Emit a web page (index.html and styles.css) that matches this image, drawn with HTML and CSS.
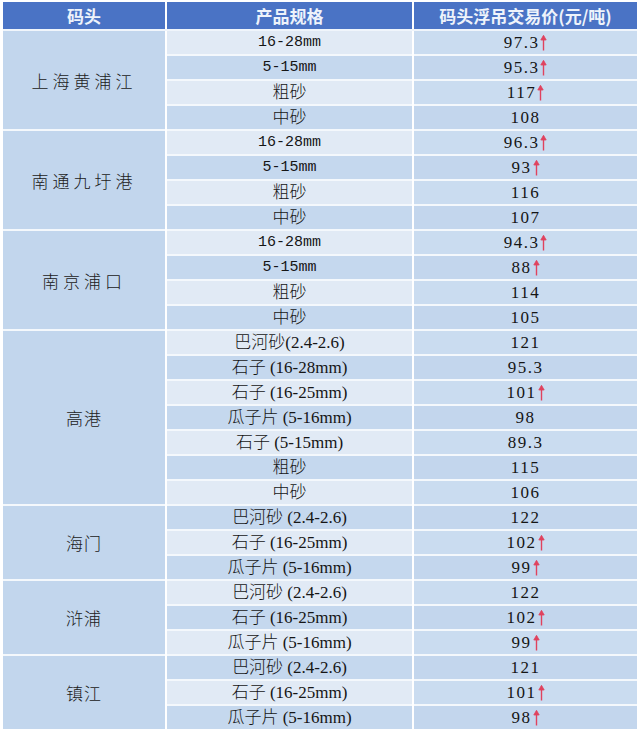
FILE: index.html
```html
<!DOCTYPE html>
<html lang="zh">
<head>
<meta charset="utf-8">
<title>码头浮吊交易价</title>
<link rel="stylesheet" href="styles.css">
</head>
<body>
<div class="wrap">
<table class="price">
  <colgroup><col class="c1"><col class="c2"><col class="c3"></colgroup>
  <thead>
    <tr><th>码头</th><th>产品规格</th><th>码头浮吊交易价(元/吨)</th></tr>
  </thead>
  <tbody>
    <tr class="l"><td class="port sp" rowspan="4">上海黄浦江</td><td class="mm">16-28mm</td><td class="v">97.3<svg class="up" viewBox="0 0 7 16"><path d="M3.5 16V3"/><path class="h" d="M0.8 5.5L3.5 0.8 6.2 5.5Z"/></svg></td></tr>
    <tr class="m"><td class="mm">5-15mm</td><td class="v">95.3<svg class="up" viewBox="0 0 7 16"><path d="M3.5 16V3"/><path class="h" d="M0.8 5.5L3.5 0.8 6.2 5.5Z"/></svg></td></tr>
    <tr class="l"><td class="cn">粗砂</td><td class="v">117<svg class="up" viewBox="0 0 7 16"><path d="M3.5 16V3"/><path class="h" d="M0.8 5.5L3.5 0.8 6.2 5.5Z"/></svg></td></tr>
    <tr class="m"><td class="cn">中砂</td><td class="v">108</td></tr>

    <tr class="l"><td class="port sp" rowspan="4">南通九圩港</td><td class="mm">16-28mm</td><td class="v">96.3<svg class="up" viewBox="0 0 7 16"><path d="M3.5 16V3"/><path class="h" d="M0.8 5.5L3.5 0.8 6.2 5.5Z"/></svg></td></tr>
    <tr class="m"><td class="mm">5-15mm</td><td class="v">93<svg class="up" viewBox="0 0 7 16"><path d="M3.5 16V3"/><path class="h" d="M0.8 5.5L3.5 0.8 6.2 5.5Z"/></svg></td></tr>
    <tr class="l"><td class="cn">粗砂</td><td class="v">116</td></tr>
    <tr class="m"><td class="cn">中砂</td><td class="v">107</td></tr>

    <tr class="l"><td class="port sp" rowspan="4">南京浦口</td><td class="mm">16-28mm</td><td class="v">94.3<svg class="up" viewBox="0 0 7 16"><path d="M3.5 16V3"/><path class="h" d="M0.8 5.5L3.5 0.8 6.2 5.5Z"/></svg></td></tr>
    <tr class="m"><td class="mm">5-15mm</td><td class="v">88<svg class="up" viewBox="0 0 7 16"><path d="M3.5 16V3"/><path class="h" d="M0.8 5.5L3.5 0.8 6.2 5.5Z"/></svg></td></tr>
    <tr class="l"><td class="cn">粗砂</td><td class="v">114</td></tr>
    <tr class="m"><td class="cn">中砂</td><td class="v">105</td></tr>

    <tr class="l"><td class="port" rowspan="7">高港</td><td class="cn">巴河砂(2.4-2.6)</td><td class="v">121</td></tr>
    <tr class="m"><td class="cn">石子 (16-28mm)</td><td class="v">95.3</td></tr>
    <tr class="l"><td class="cn">石子 (16-25mm)</td><td class="v">101<svg class="up" viewBox="0 0 7 16"><path d="M3.5 16V3"/><path class="h" d="M0.8 5.5L3.5 0.8 6.2 5.5Z"/></svg></td></tr>
    <tr class="m"><td class="cn">瓜子片 (5-16mm)</td><td class="v">98</td></tr>
    <tr class="l"><td class="cn">石子 (5-15mm)</td><td class="v">89.3</td></tr>
    <tr class="m"><td class="cn">粗砂</td><td class="v">115</td></tr>
    <tr class="l"><td class="cn">中砂</td><td class="v">106</td></tr>

    <tr class="m"><td class="port" rowspan="3">海门</td><td class="cn">巴河砂 (2.4-2.6)</td><td class="v">122</td></tr>
    <tr class="l"><td class="cn">石子 (16-25mm)</td><td class="v">102<svg class="up" viewBox="0 0 7 16"><path d="M3.5 16V3"/><path class="h" d="M0.8 5.5L3.5 0.8 6.2 5.5Z"/></svg></td></tr>
    <tr class="m"><td class="cn">瓜子片 (5-16mm)</td><td class="v">99<svg class="up" viewBox="0 0 7 16"><path d="M3.5 16V3"/><path class="h" d="M0.8 5.5L3.5 0.8 6.2 5.5Z"/></svg></td></tr>

    <tr class="l"><td class="port" rowspan="3">浒浦</td><td class="cn">巴河砂 (2.4-2.6)</td><td class="v">122</td></tr>
    <tr class="m"><td class="cn">石子 (16-25mm)</td><td class="v">102<svg class="up" viewBox="0 0 7 16"><path d="M3.5 16V3"/><path class="h" d="M0.8 5.5L3.5 0.8 6.2 5.5Z"/></svg></td></tr>
    <tr class="l"><td class="cn">瓜子片 (5-16mm)</td><td class="v">99<svg class="up" viewBox="0 0 7 16"><path d="M3.5 16V3"/><path class="h" d="M0.8 5.5L3.5 0.8 6.2 5.5Z"/></svg></td></tr>

    <tr class="m"><td class="port" rowspan="3">镇江</td><td class="cn">巴河砂 (2.4-2.6)</td><td class="v">121</td></tr>
    <tr class="l"><td class="cn">石子 (16-25mm)</td><td class="v">101<svg class="up" viewBox="0 0 7 16"><path d="M3.5 16V3"/><path class="h" d="M0.8 5.5L3.5 0.8 6.2 5.5Z"/></svg></td></tr>
    <tr class="m"><td class="cn">瓜子片 (5-16mm)</td><td class="v">98<svg class="up" viewBox="0 0 7 16"><path d="M3.5 16V3"/><path class="h" d="M0.8 5.5L3.5 0.8 6.2 5.5Z"/></svg></td></tr>
  </tbody>
</table>
</div>
</body>
</html>
```

FILE: styles.css
```css
html, body {
  margin: 0;
  padding: 0;
  background: #ffffff;
}

.wrap {
  padding: 2px 3px 0 3px;
}

.price {
  width: 634px;
  table-layout: fixed;
  border-collapse: collapse;
  font-family: "Liberation Serif", "Noto Sans CJK SC", serif;
  color: #151515;
}

.c1 { width: 163px; }
.c2 { width: 247px; }
.c3 { width: 224px; }

.price th {
  height: 27px;
  padding: 0;
  background: #4a73c5;
  color: #eef3fb;
  font-family: "Noto Sans CJK SC", sans-serif;
  font-weight: 700;
  font-size: 17px;
  border-left: 2px solid #ffffff;
  border-bottom: 2px solid #f0f5fb;
  text-align: center;
  vertical-align: middle;
  line-height: 1;
}

.price th:first-child { border-left: 0; }

.price td {
  height: 23px;
  padding: 0;
  text-align: center;
  vertical-align: middle;
  line-height: 1;
  border-top: 2px solid #f4f8fc;
  border-left: 2px solid #ffffff;
  white-space: nowrap;
}

.price tbody tr:first-child td { border-top: 0; }

.price td.port {
  border-left: 0;
  background: #c2d6ed;
  font-family: "Noto Sans CJK SC", sans-serif;
  font-weight: 300;
  font-size: 17px;
  color: #202020;
  letter-spacing: 1px;
}

.price td.port.sp { letter-spacing: 4px; }

.l td { background: #e1eaf5; }
.m td { background: #c5d8ee; }
.l td.v { background: #cadcf0; }
.m td.v { background: #c3d6ed; }

.mm {
  font-family: "Liberation Mono", monospace;
  font-size: 15px;
  letter-spacing: 0;
}

.cn {
  font-family: "Liberation Serif", "Noto Sans CJK SC", serif;
  font-weight: 300;
  font-size: 17px;
}

.v {
  font-size: 17px;
  letter-spacing: 1.5px;
}

.up {
  display: inline-block;
  width: 7px;
  height: 17px;
  margin-left: 1px;
  vertical-align: -3px;
}

.up path {
  stroke: #e0425e;
  stroke-width: 1.4;
  fill: none;
}

.up path.h {
  fill: #e0425e;
  stroke-width: 0.8;
}
```
